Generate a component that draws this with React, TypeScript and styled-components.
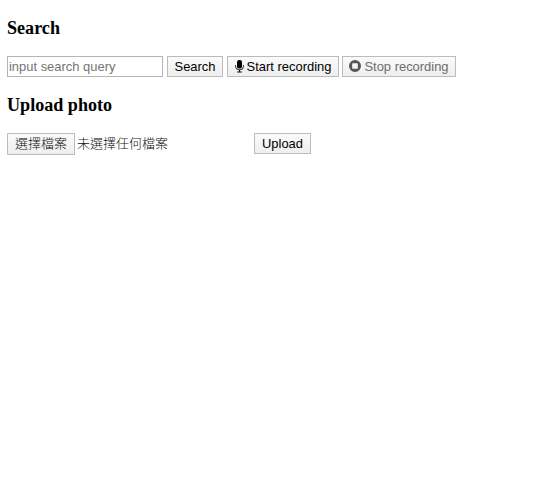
import React from "react";
import styled, { createGlobalStyle } from "styled-components";

const GlobalStyle = createGlobalStyle`
  body { margin: 0; background: #fff; color: #000; font-family: "Liberation Serif", serif; }
  * { box-sizing: border-box; }
`;
const Page = styled.main`
  min-height: 100vh;
  padding: 18px 7px 0;
`;
const Heading = styled.h3`
  margin: 0 0 18px;
  font-size: 18.1px;
  line-height: 20px;
  font-weight: 700;
`;
const Row = styled.form`
  display: flex;
  align-items: flex-start;
  height: 22px;
  margin-bottom: 17px;
`;
const UploadRow = styled(Row)`
  height: 24px;
  margin-bottom: 0;
`;
const Query = styled.input`
  width: 156px;
  height: 21px;
  margin-right: 4px;
  padding: 0 1px 1px;
  border: 1px solid #b4b4b4;
  border-radius: 0;
  font: 12.95px "Liberation Sans", sans-serif;
  outline: none;
  &::placeholder { color: #757575; opacity: 1; }
`;
const Button = styled.button<{ $width: number; $gap?: number }>`
  display: flex;
  align-items: center;
  justify-content: center;
  flex: none;
  gap: 3px;
  width: ${(p) => p.$width}px;
  height: 21px;
  margin-right: ${(p) => p.$gap ?? 3}px;
  padding: 0 0 1px;
  border: 1px solid #bcbcbc;
  border-radius: 0;
  background: linear-gradient(#fbfbfb, #eeeeee);
  color: #000;
  font: 12.95px "Liberation Sans", "Noto Sans CJK TC", sans-serif;
  white-space: nowrap;
  &:disabled { color: #6d6d6d; }
`;
const FileButton = styled(Button)`
  height: 22px;
  margin-right: 2px;
  padding-bottom: 0;
  color: #111;
  font-size: 13px;
  font-weight: 300;
  line-height: 20px;
`;
const FileStatus = styled.span`
  width: 177px;
  color: #111;
  font: 300 13px/22px "Liberation Sans", "Noto Sans CJK TC", sans-serif;
`;
const Icon = styled.svg`
  display: block;
  flex: none;
`;

const Mic = () => (
  <Icon width="9" height="13" viewBox="0 0 9 13" fill="none" stroke="currentColor">
    <rect x="2" y="0" width="5" height="8.6" rx="2.2" fill="currentColor" stroke="none" />
    <path d="M.6 5v1.8a3.9 3.1 0 0 0 7.8 0V5" strokeWidth=".8" />
    <path d="M4.5 9.8v2M2.2 12h4.6" />
  </Icon>
);
const Stop = () => (
  <Icon width="12" height="12" viewBox="0 0 12 12" fill="#555">
    <path fillRule="evenodd" d="M6 0a6 6 0 1 1 0 12A6 6 0 0 1 6 0ZM3.8 3.2Q3.2 3.2 3.2 3.8v4.4q0 .6.6.6h4.4q.6 0 .6-.6V3.8q0-.6-.6-.6Z" />
  </Icon>
);

export default function App() {
  return (
    <Page>
      <GlobalStyle />
      <Heading>Search</Heading>
      <Row>
        <Query placeholder="input search query" />
        <Button type="button" $width={56} $gap={4}>Search</Button>
        <Button type="button" $width={112}><Mic />Start recording</Button>
        <Button type="button" $width={114} disabled><Stop />Stop recording</Button>
      </Row>
      <Heading>Upload photo</Heading>
      <UploadRow>
        <FileButton type="button" $width={68}>選擇檔案</FileButton>
        <FileStatus>未選擇任何檔案</FileStatus>
        <Button type="button" $width={57}>Upload</Button>
      </UploadRow>
    </Page>
  );
}
